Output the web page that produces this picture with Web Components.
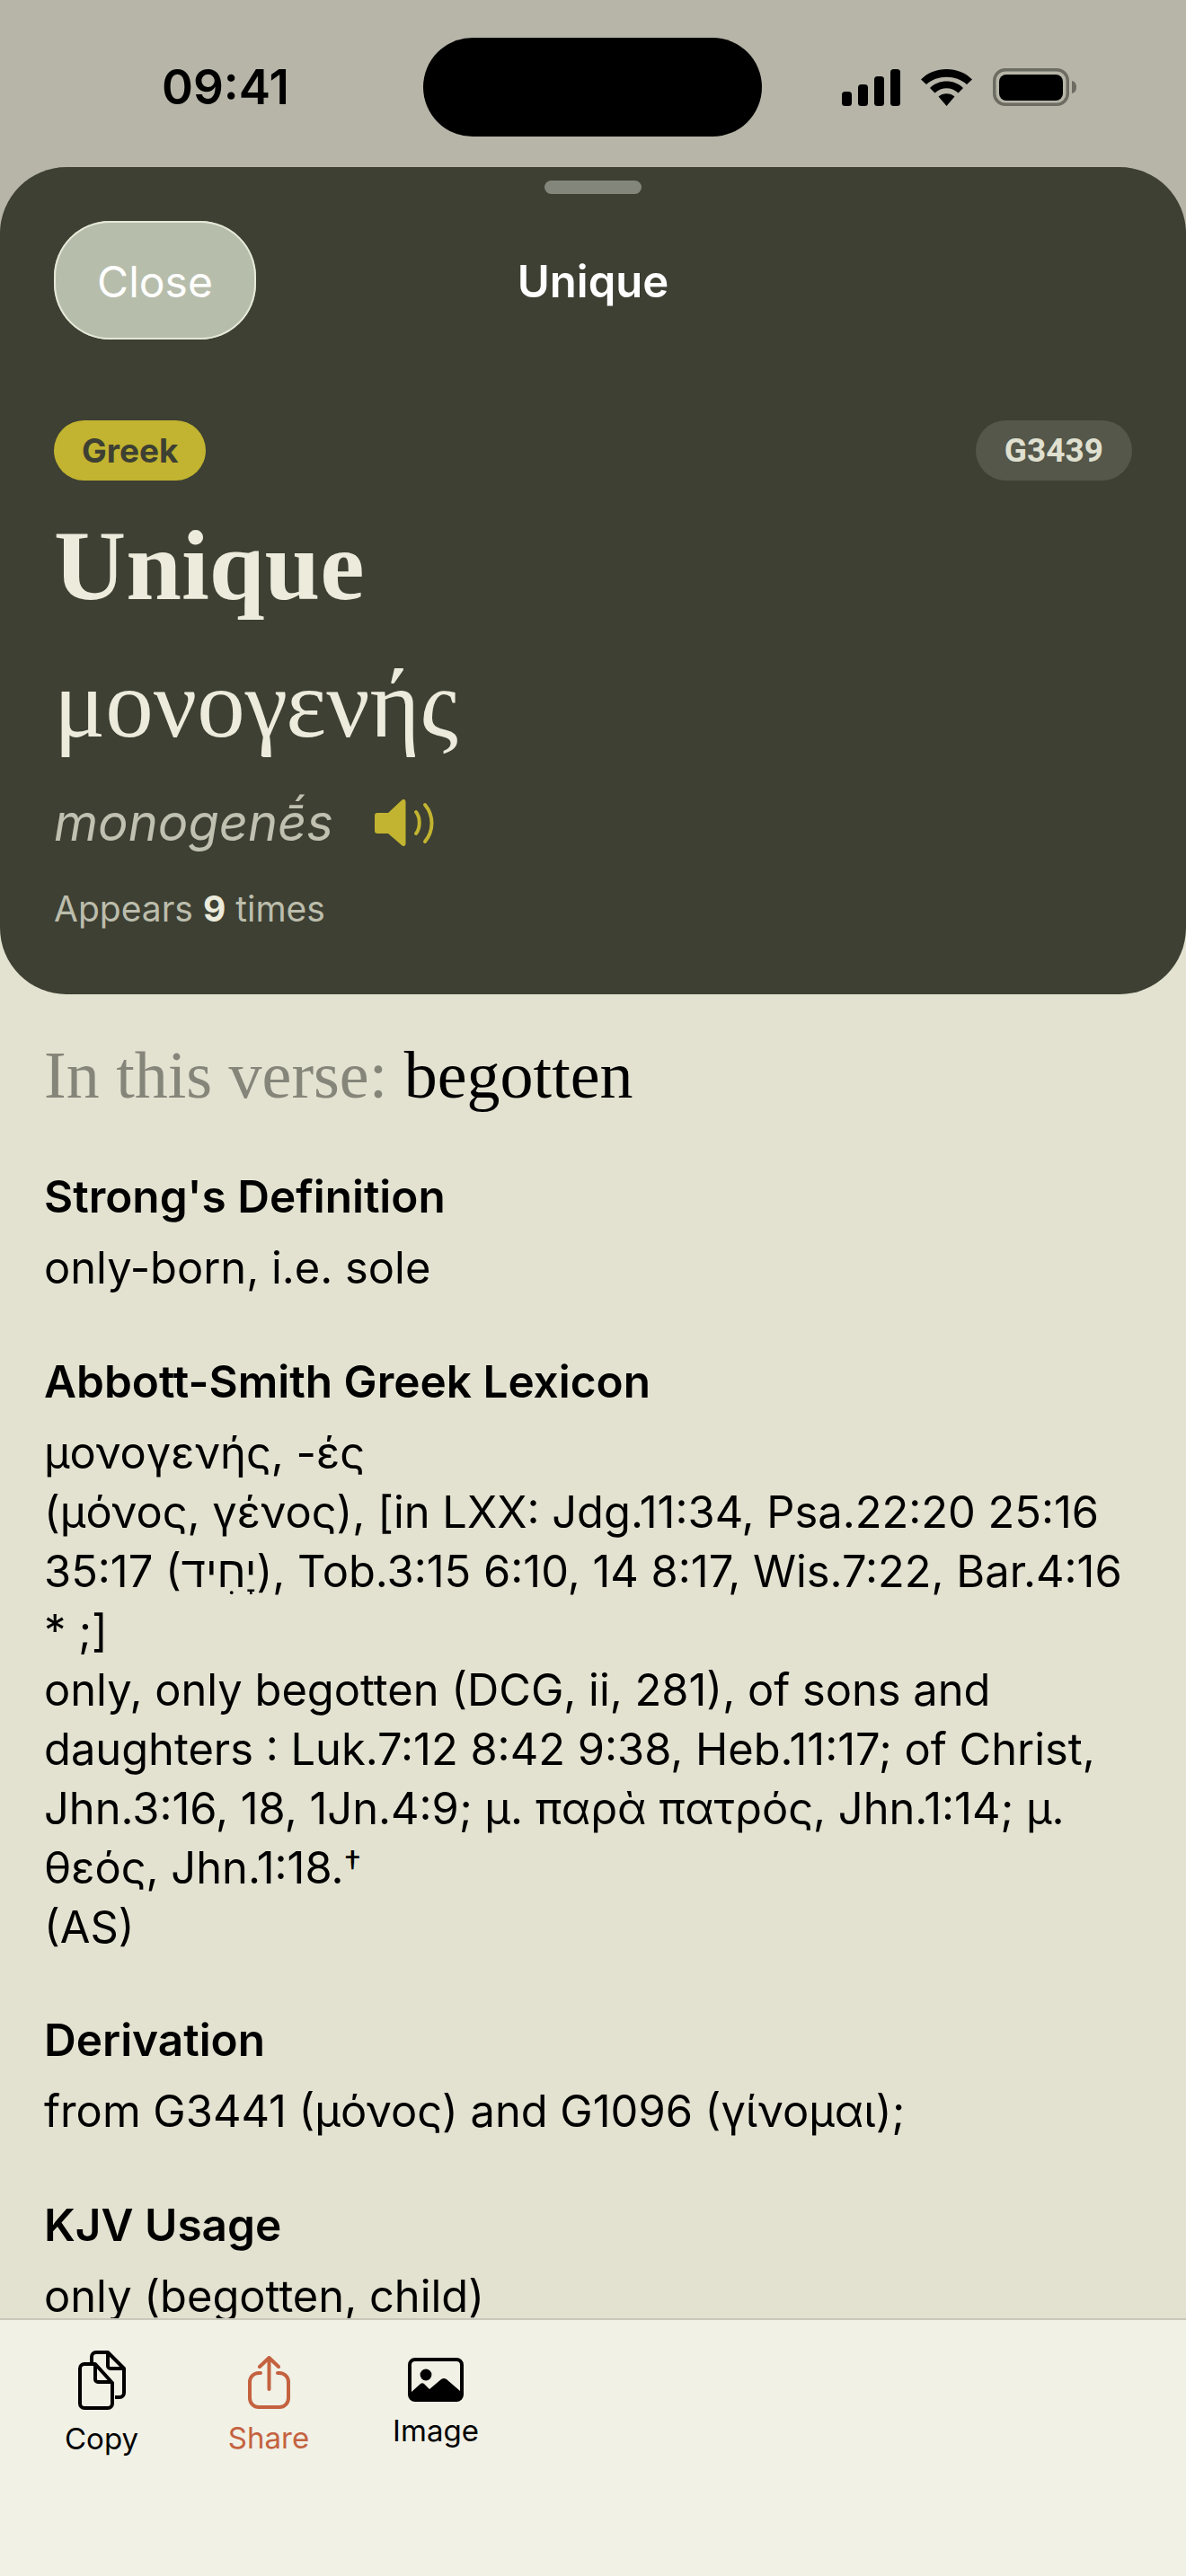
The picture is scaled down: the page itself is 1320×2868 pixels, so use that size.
<!DOCTYPE html>
<html lang="en">
<head>
<meta charset="utf-8">
<title>Unique</title>
<style>
  html, body { margin: 0; padding: 0; }
  body { width: 1320px; height: 2868px; overflow: hidden; background: #b7b5a8; font-family: Inter, "Noto Sans", "Liberation Sans", sans-serif; }
</style>
</head>
<body>
<word-sheet>
  <status-bar slot="status" time="09:41"></status-bar>
  <sheet-header slot="header" title="Unique" lang-name="Greek" code="G3439" word="Unique" original="μονογενής" translit="monogenḗs" count="9"></sheet-header>

  <verse-line>In this verse: <b>begotten</b></verse-line>
  <lex-section heading="Strong's Definition">only-born, i.e. sole</lex-section>
  <lex-section heading="Abbott-Smith Greek Lexicon">μονογενής, -ές<br>(μόνος, γένος), [in LXX: Jdg.11:34, Psa.22:20 25:16<br>35:17 (יָחִיד), Tob.3:15 6:10, 14 8:17, Wis.7:22, Bar.4:16<br>* ;]<br>only, only begotten (DCG, ii, 281), of sons and<br>daughters : Luk.7:12 8:42 9:38, Heb.11:17; of Christ,<br>Jhn.3:16, 18, 1Jn.4:9; μ. παρὰ πατρός, Jhn.1:14; μ.<br>θεός, Jhn.1:18.<span style="font-size:.8em;line-height:0;vertical-align:8px">†</span><br>(AS)</lex-section>
  <lex-section heading="Derivation">from G3441 (μόνος) and G1096 (γίνομαι);</lex-section>
  <lex-section heading="KJV Usage">only (begotten, child)</lex-section>

  <action-bar slot="actions">
    <action-button label="Copy" icon="copy" style="--top:34px"></action-button>
    <action-button label="Share" icon="share" tint="#c4623f" style="--top:40px"></action-button>
    <action-button label="Image" icon="image" style="--top:42px"></action-button>
  </action-bar>
</word-sheet>

<script>
class WordSheet extends HTMLElement {
  constructor() {
    super();
    this.attachShadow({ mode: 'open' });
    this.shadowRoot.innerHTML = `
      <style>
        :host { display: flex; flex-direction: column; width: 1320px; height: 2868px; background: #b7b5a8; color: #000; }
        .content { flex: 1; min-height: 0; overflow: hidden; background: #e3e2d1; margin-top: -74px; padding: 122px 49px 0; }
        ::slotted([slot="header"]) { position: relative; z-index: 1; }
      </style>
      <slot name="status"></slot>
      <slot name="header"></slot>
      <div class="content"><slot></slot></div>
      <slot name="actions"></slot>
    `;
  }
}

class StatusBar extends HTMLElement {
  constructor() {
    super();
    this.attachShadow({ mode: 'open' });
  }
  connectedCallback() {
    this.shadowRoot.innerHTML = `
      <style>
        :host { display: flex; align-items: center; height: 186px; padding: 8px 121px 0 180px; box-sizing: border-box; position: relative; z-index: 2; }
        .time { font: 600 53px/60px Inter, sans-serif; color: #000; width: 291px; }
        .island { width: 377px; height: 110px; border-radius: 55px; background: #000; }
        .icons { display: flex; align-items: center; margin-left: auto; }
      </style>
      <span class="time">${this.getAttribute('time')}</span>
      <div class="island"></div>
      <div class="icons">
        <svg width="262" height="43" viewBox="0 0 262 43">
          <rect x="0" y="26" width="11" height="16" rx="3.500"/>
          <rect x="18" y="18" width="11" height="24" rx="3.500"/>
          <rect x="36" y="9" width="11" height="33" rx="3.500"/>
          <rect x="54" y="1" width="11" height="41" rx="3.500"/>
          <path d="M88 12.500 C 102 -3 131 -3 145 12.500 L 139 18 C 127 7 106 7 94 18 Z"/>
          <path d="M98 22 C 107 12 126 12 135 22 L 129.500 27.500 C 122 20.500 111 20.500 103.500 27.500 Z"/>
          <path d="M107.500 31.500 C 112 27 121 27 125.500 31.500 L 116.500 42 Z"/>
          <rect x="169.750" y="1.750" width="81.500" height="38.500" rx="12" fill="none" stroke="#6d6c62" stroke-width="3.500"/>
          <rect x="175" y="7" width="71" height="29" rx="8"/>
          <path d="M256 14 C 260 15 261 18 261 21 C 261 24 260 27 256 28 Z" fill="#6d6c62"/>
        </svg>
      </div>
    `;
  }
}

class SheetHeader extends HTMLElement {
  constructor() {
    super();
    this.attachShadow({ mode: 'open' });
  }
  connectedCallback() {
    const a = (n) => this.getAttribute(n);
    this.shadowRoot.innerHTML = `
      <style>
        :host { display: block; background: #3d4033; border-radius: 74px; height: 921px; padding: 15px 60px 0; box-sizing: border-box; color: #ecebdc; }
        .grabber { width: 108px; height: 15px; border-radius: 8px; background: #83867b; margin: 0 auto; }
        .nav { display: grid; grid-template-columns: 225px 1fr 225px; align-items: center; margin-top: 30px; height: 132px; }
        .close { height: 132px; border-radius: 62px; background: #b7bdab; box-shadow: inset 0 0 0 2px #e4e8d6; color: #fff; font: 400 48px/135px Inter, sans-serif; text-align: center; }
        .title { text-align: center; color: #fff; font: 600 49px/60px Inter, sans-serif; padding-top: 3px; }
        .tags { display: flex; justify-content: space-between; margin-top: 90px; }
        .tag { height: 67px; border-radius: 34px; line-height: 67px; }
        .lang { background: #c2b330; color: #3d4033; font: 700 37px/67px Inter, sans-serif; padding: 0 31px; }
        .code { background: #54574a; color: #e0e0d0; font: 700 37px/67px Roboto, sans-serif; padding: 0 32px; }
        h1 { font: 700 111px/134px "Liberation Serif", serif; margin: 28px 0 0; color: #ecebdc; }
        .orig { font: 400 107px/120px "Liberation Serif", serif; margin-top: 27px; }
        .trans { display: flex; align-items: center; gap: 46px; margin-top: 32px; height: 80px; font: italic 400 56px/80px Inter, sans-serif; color: #c0c1b0; }
        .count { font: 400 39px/48px Inter, sans-serif; color: #bcbdac; margin-top: 32px; }
        .count b { font-weight: 700; color: #ecebdc; }
      </style>
      <div class="grabber"></div>
      <div class="nav">
        <div class="close">Close</div>
        <div class="title">${a('title')}</div>
        <div></div>
      </div>
      <div class="tags"><span class="tag lang">${a('lang-name')}</span><span class="tag code">${a('code')}</span></div>
      <h1>${a('word')}</h1>
      <div class="orig">${a('original')}</div>
      <div class="trans">
        <span>${a('translit')}</span>
        <svg width="66" height="52" viewBox="0 0 66 52">
          <path d="M0 18 a3 3 0 0 1 3-3 H15 L30 1 C32 -1 34.500 0 34.500 3 V49 C34.500 52 32 53 30 51 L15 38 H3 a3 3 0 0 1-3-3 Z" fill="#c2b330"/>
          <path d="M46 14 C51 20 51 32 46 38" fill="none" stroke="#c2b330" stroke-width="4" stroke-linecap="round"/>
          <path d="M56 6 C66 18 66 35 56 47" fill="none" stroke="#c2b330" stroke-width="4" stroke-linecap="round"/>
        </svg>
      </div>
      <div class="count">Appears <b>${a('count')}</b> times</div>
    `;
  }
}

class VerseLine extends HTMLElement {
  constructor() {
    super();
    this.attachShadow({ mode: 'open' });
    this.shadowRoot.innerHTML = `
      <style>
        :host { display: block; font: 400 74px/84px "Liberation Serif", serif; color: #85857a; margin-bottom: 60px; white-space: nowrap; }
        ::slotted(b) { font-weight: 400; color: #000; }
      </style>
      <slot></slot>
    `;
  }
}

class LexSection extends HTMLElement {
  constructor() {
    super();
    this.attachShadow({ mode: 'open' });
  }
  connectedCallback() {
    this.shadowRoot.innerHTML = `
      <style>
        :host { display: block; margin-bottom: 59.500px; color: #000; white-space: nowrap; font: 400 48.800px/66px Inter, "Liberation Sans", sans-serif; }
        h2 { font: 600 49.500px/66px Inter, sans-serif; margin: 0 0 14px; }
      </style>
      <h2>${this.getAttribute('heading')}</h2>
      <slot></slot>
    `;
  }
}

class ActionBar extends HTMLElement {
  constructor() {
    super();
    this.attachShadow({ mode: 'open' });
    this.shadowRoot.innerHTML = `
      <style>
        :host { display: flex; height: 287px; box-sizing: border-box; background: #f1f1e6; border-top: 2px solid #c8c8bb; padding: 0 20px; align-items: flex-start; position: relative; }
      </style>
      <slot></slot>
    `;
  }
}

const ICONS = {
  copy: { w: 53, h: 66, body: `<g fill="none" stroke="currentColor" stroke-width="4" stroke-linejoin="round">
      <path d="M15 13 V7 a5 5 0 0 1 5-5 H33 L51 20 V47 a5 5 0 0 1-5 5 H41"/>
      <path d="M33 2 V17 a3 3 0 0 0 3 3 H51"/>
      <path d="M7 15 H19 L38 36 V59 a5 5 0 0 1-5 5 H7 a5 5 0 0 1-5-5 V20 a5 5 0 0 1 5-5 Z"/>
      <path d="M19 15 V32 a3 3 0 0 0 3 3 H38"/>
    </g>` },
  share: { w: 47, h: 59, body: `<g fill="none" stroke="currentColor" stroke-width="4" stroke-linecap="round" stroke-linejoin="round">
      <path d="M14 19 H12 a10 10 0 0 0-10 10 V47 a10 10 0 0 0 10 10 H35 a10 10 0 0 0 10-10 V29 a10 10 0 0 0-10-10 H33"/>
      <path d="M23.500 37 V2 M13 12 L23.500 2 L34 12"/>
    </g>` },
  image: { w: 62, h: 49, body: `<rect x="2" y="2" width="58" height="45" rx="6" fill="none" stroke="currentColor" stroke-width="4"/>
      <circle cx="20" cy="19" r="6.400" fill="currentColor"/>
      <path d="M4 38 L14 29 C15 28 17 28 18 29 L24 35 L37 24 C39 22.500 41 22.500 43 24 L58 37 V43 a4 4 0 0 1-4 4 H8 a4 4 0 0 1-4-4 Z" fill="currentColor"/>` }
};

class ActionButton extends HTMLElement {
  constructor() {
    super();
    this.attachShadow({ mode: 'open' });
  }
  connectedCallback() {
    const tint = this.getAttribute('tint') || '#000';
    const icon = ICONS[this.getAttribute('icon')];
    this.shadowRoot.innerHTML = `
      <style>
        :host { display: flex; flex-direction: column; align-items: center; width: 186px; color: ${tint}; padding-top: var(--top, 0); }
        svg { display: block; }
        span { font: 400 33px/40px Inter, sans-serif; margin-top: 12px; }
      </style>
      <svg width="${icon.w}" height="${icon.h}" viewBox="0 0 ${icon.w} ${icon.h}">${icon.body}</svg>
      <span>${this.getAttribute('label')}</span>
    `;
  }
}

customElements.define('word-sheet', WordSheet);
customElements.define('status-bar', StatusBar);
customElements.define('sheet-header', SheetHeader);
customElements.define('verse-line', VerseLine);
customElements.define('lex-section', LexSection);
customElements.define('action-bar', ActionBar);
customElements.define('action-button', ActionButton);
</script>
</body>
</html>
